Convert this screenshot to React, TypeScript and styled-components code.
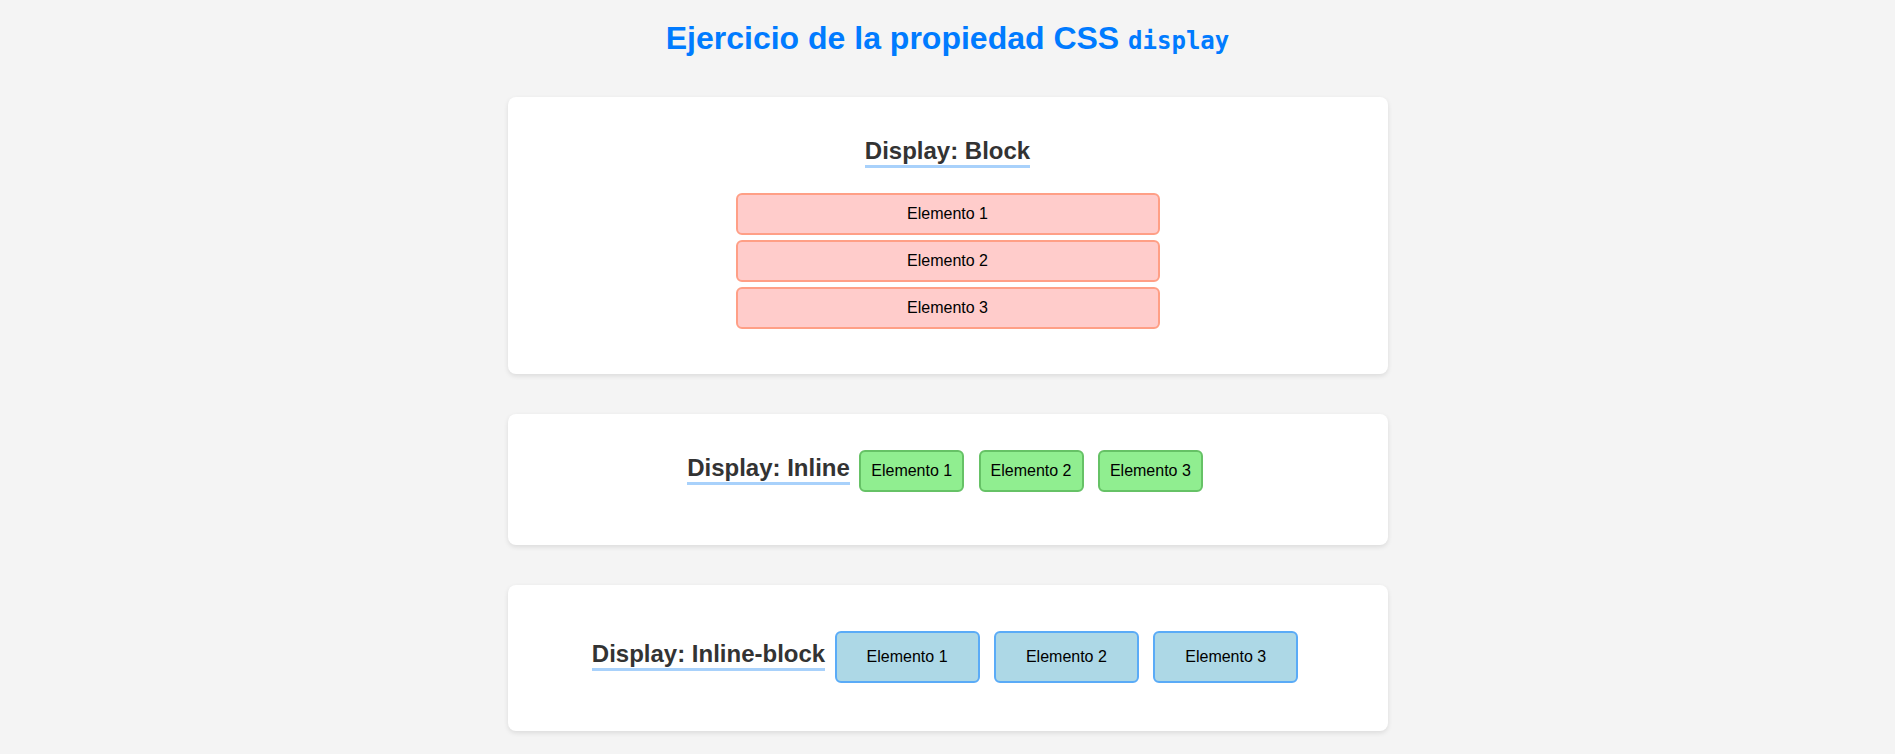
import React from "react";
import styled, { createGlobalStyle } from "styled-components";

const GlobalStyle = createGlobalStyle`
  html, body {
    margin: 0;
    padding: 0;
    background: #f4f4f4;
    font-family: "Liberation Sans", Arial, sans-serif;
    color: #000;
  }
`;

const Page = styled.main`
  padding: 20px 20px 40px;
`;

const Title = styled.h1`
  margin: 0 0 40px;
  text-align: center;
  font-size: 32px;
  font-weight: 700;
  line-height: normal;
  color: #007bff;
`;

const Code = styled.code`
  font-family: "DejaVu Sans Mono", "Liberation Mono", monospace;
  font-size: 24px;
  font-weight: 700;
`;

const Card = styled.section<{ $top?: number }>`
  max-width: 880px;
  box-sizing: border-box;
  margin: 0 auto 40px;
  padding: ${(p) => p.$top ?? 20}px 20px 40px;
  background: #fff;
  border-radius: 8px;
  box-shadow: 0 2px 5px rgba(0, 0, 0, 0.1);
  text-align: center;
`;

const Heading = styled.h2`
  display: inline-block;
  margin: 20px 0;
  padding: 0;
  font-size: 24px;
  font-weight: 700;
  line-height: normal;
  color: #333;
  border-bottom: 3px solid #a8d1fb;
  white-space: nowrap;
`;

const BlockList = styled.div`
  display: flex;
  flex-direction: column;
  align-items: center;
  gap: 5px;
  margin: 5px 0 5px;
`;

const BlockItem = styled.div`
  box-sizing: border-box;
  width: 424px;
  padding: 10px;
  font-size: 16px;
  line-height: normal;
  background: #ffcccb;
  border: 2px solid #ff9f86;
  border-radius: 6px;
`;

const Row = styled.div`
  display: flex;
  justify-content: center;
  align-items: baseline;
  column-gap: 4.4px;
`;

const InlineItem = styled.span`
  margin: 0 5px;
  padding: 10px;
  font-size: 16px;
  line-height: normal;
  background: #90ee90;
  border: 2px solid #66c266;
  border-radius: 6px;
  white-space: nowrap;
`;

const InlineBlockItem = styled.div`
  margin: 0 5px;
  padding: 15px 30px;
  font-size: 16px;
  line-height: normal;
  text-align: center;
  background: #add8e6;
  border: 2px solid #5aabf7;
  border-radius: 6px;
  white-space: nowrap;
`;

const items = ["Elemento 1", "Elemento 2", "Elemento 3"];

export default function App() {
  return (
    <>
      <GlobalStyle />
      <Page>
        <Title>
          Ejercicio de la propiedad CSS <Code>display</Code>
        </Title>

        <Card>
          <Heading>Display: Block</Heading>
          <BlockList>
            {items.map((t) => (
              <BlockItem key={t}>{t}</BlockItem>
            ))}
          </BlockList>
        </Card>

        <Card>
          <Row>
            <Heading>Display: Inline</Heading>
            {items.map((t) => (
              <InlineItem key={t}>{t}</InlineItem>
            ))}
          </Row>
        </Card>

        <Card $top={35}>
          <Row>
            <Heading>Display: Inline-block</Heading>
            {items.map((t) => (
              <InlineBlockItem key={t}>{t}</InlineBlockItem>
            ))}
          </Row>
        </Card>
      </Page>
    </>
  );
}
